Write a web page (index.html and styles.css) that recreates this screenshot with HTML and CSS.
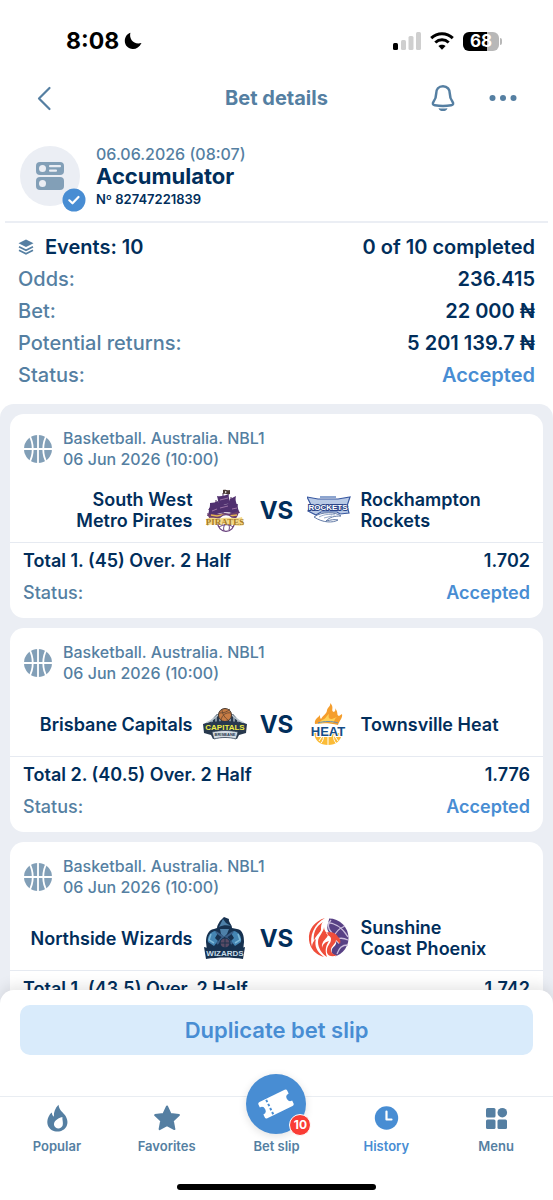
FILE: index.html
```html
<!DOCTYPE html>
<html lang="en">
<head>
<meta charset="UTF-8">
<meta name="viewport" content="width=device-width, initial-scale=1.0">
<title>Bet details</title>
<link rel="stylesheet" href="styles.css">
</head>
<body>
  <!-- shared icons -->
  <svg class="sprite" aria-hidden="true">
    <symbol id="basketball" viewBox="0 0 30 30">
      <circle cx="15" cy="15" r="14" fill="#829fb7"/>
      <path d="M15 0v30M0 15h30M6 1c5 8 5 20 0 28M24 1c-5 8-5 20 0 28" fill="none" stroke="#fff" stroke-width="1.8"/>
    </symbol>
  </svg>

  <div class="app">
    <div class="statusbar">
      <div class="clock">
        <span>8:08</span>
        <svg width="18" height="18" viewBox="0 0 18 18"><path d="M6.4.8C4.8 7.2 10 13.3 17.500 11 15.400 15.200 12 17.200 8.700 17 4.200 16.800.8 13.400.8 9 .8 5 3 2 6.400.8z"/></svg>
      </div>
      <div class="indicators">
        <svg width="28" height="18" viewBox="0 0 28 18">
          <rect x="0" y="11" width="5" height="7" rx="1.5"/>
          <g fill="#cfcfcf"><rect x="8" y="8" width="5" height="10" rx="1.5"/><rect x="15.500" y="4" width="5" height="14" rx="1.5"/><rect x="23" y="0" width="5" height="18" rx="1.5"/></g>
        </svg>
        <svg width="24" height="18" viewBox="0 0 24 18">
          <path d="M1.200 6.200C7.500.4 16.500.4 22.800 6.200M5.300 10.500c3.900-3.600 9.500-3.600 13.400 0" fill="none" stroke="#000" stroke-width="3"/>
          <path d="M12 17.800l-3.600-3.700c2-1.800 5.200-1.800 7.200 0z"/>
        </svg>
        <div class="battery"><span>68</span></div>
      </div>
    </div>

    <header class="topbar">
      <button class="icon-btn" aria-label="Back">
        <svg width="18" height="26" viewBox="0 0 18 26"><path d="M13.500 3L3 13.500l10.500 10.500" fill="none" stroke="#557fa2" stroke-width="2.2" stroke-linecap="round" stroke-linejoin="round"/></svg>
      </button>
      <h1>Bet details</h1>
      <div class="topbar-actions">
        <button class="icon-btn" aria-label="Notifications">
          <svg width="26" height="28" viewBox="0 0 26 28"><path d="M13 2.300c-4.500 0-6.800 3.200-6.800 7.200 0 4.500-1 6-2.700 8.300-1.200 1.700-.7 3.200 1.300 3.500 5.500.9 10.900.9 16.400 0 2-.3 2.500-1.800 1.300-3.500-1.700-2.300-2.700-3.800-2.700-8.300 0-4-2.300-7.200-6.800-7.200z" fill="none" stroke="#557fa2" stroke-width="2.500"/><path d="M8.500 24.200c3 .5 6 .5 9 0-.9 3.800-8.100 3.800-9 0z" fill="#557fa2"/></svg>
        </button>
        <button class="icon-btn" aria-label="More">
          <svg width="28" height="26" viewBox="0 0 28 26" fill="#557fa2"><circle cx="3.500" cy="13" r="3"/><circle cx="14" cy="13" r="3"/><circle cx="24.500" cy="13" r="3"/></svg>
        </button>
      </div>
    </header>

    <section class="ticket">
      <div class="avatar">
        <svg width="30" height="30" viewBox="0 0 30 30">
          <rect x="1" y="1" width="28" height="13" rx="4" fill="#829fb7"/>
          <rect x="1" y="16" width="28" height="13" rx="4" fill="#829fb7"/>
          <g fill="#ebeef4"><circle cx="7.500" cy="7.500" r="3.500"/><circle cx="7.500" cy="22.500" r="3.500"/><rect x="14" y="4" width="12" height="2.200" rx="1"/><rect x="14" y="8.500" width="8" height="2.200" rx="1"/></g>
        </svg>
        <svg class="avatar-badge" width="24" height="24" viewBox="0 0 24 24"><circle cx="12" cy="12" r="11.500" fill="#488dd3"/><path d="M7.300 12.300l3.200 3 6-6.300" fill="none" stroke="#fff" stroke-width="2.200" stroke-linecap="round" stroke-linejoin="round"/></svg>
      </div>
      <div class="ticket-info">
        <div class="ticket-date">06.06.2026 (08:07)</div>
        <h2>Accumulator</h2>
        <div class="ticket-number">Nº 82747221839</div>
      </div>
    </section>

    <dl class="summary">
      <div class="strong">
        <dt><svg width="16" height="16" viewBox="0 0 16 16" fill="#557fa2"><path d="M8 .5l7.500 3.800L8 8 .5 4.300z"/><path d="M1 7.700l7 3.500 7-3.500M1 11.300l7 3.500 7-3.500" fill="none" stroke="#557fa2" stroke-width="1.700"/></svg>Events: 10</dt>
        <dd>0 of 10 completed</dd>
      </div>
      <div><dt>Odds:</dt><dd>236.415</dd></div>
      <div><dt>Bet:</dt><dd>22 000 ₦</dd></div>
      <div><dt>Potential returns:</dt><dd>5 201 139.7 ₦</dd></div>
      <div><dt>Status:</dt><dd class="accepted">Accepted</dd></div>
    </dl>

    <main class="events">
      <article class="event">
        <div class="event-head">
          <svg width="30" height="30"><use href="#basketball"/></svg>
          <div>Basketball. Australia. NBL1<br>06 Jun 2026 (10:00)</div>
        </div>
        <div class="teams">
          <div class="team home">South West<br>Metro Pirates</div>
          <svg class="logo" viewBox="0 0 44 44">
            <path d="M20 5v25M13 12v17M28 9v21" stroke="#4a2857" stroke-width="1"/>
            <path d="M20 2c3-1 4 1 7 0v4c-3 1-4-1-7 0z" fill="#4a3a35"/><path d="M22 3l2 1-2 1z" fill="#fff"/>
            <path d="M14 8c4 1 9-1 12-2-1 4 1 6 2 10-4-1-9 1-14 2 2-3 1-6 0-10zM27 11l6-3c-1 4 0 6 1 9l-7 1zM7 15c3 0 6-1 8-2v8c-3-1-7 1-10 1 2-2 2-4 2-7zM14 17c5-1 10 0 14-2 0 4 0 7 3 10-5-1-11-1-17 1 1-3 1-5 0-9zM27 18l8-2c-1 4 1 7 2 9l-9 1zM6 20l9-1v9H4c2-3 2-5 2-8z" fill="#50306f"/>
            <path d="M17 12l8-2M17 20l8-2M9 23l5-2M29 21l5-1" stroke="#ae83b3" stroke-width=".8"/>
            <path d="M4 25c6 3 12 0 18 0 5 1 9 0 14-2-1 6-3 8-7 10H12c-5-1-7-4-8-8z" fill="#6b3e6e"/>
            <path d="M8 27l6 1 5-1 7 1 8-1" fill="none" stroke="#e5b653" stroke-width="1.500"/>
            <circle cx="23" cy="35" r="8.300" fill="#fff" stroke="#67407c" stroke-width="1.300"/>
            <path d="M16 39c5-3 10-3 14 0M21 43c-1-3 0-5 1-7M26 42c1-3 0-5-1-7" fill="none" stroke="#67407c" stroke-width="1"/>
            <path d="M3 31c6-3 10 0 16-1 7-1 14 1 20-1l2 8c-6 2-12-1-18-1-6 0-14-1-19 2z" fill="#f4d98a"/>
            <text x="22" y="37" class="logo-text pirates">PIRATES</text>
          </svg>
          <div class="vs">VS</div>
          <svg class="logo" viewBox="0 0 44 44">
            <rect x="13" y="8" width="16" height="2" fill="#8da5cf"/>
            <path d="M0 9l11 2h20l12-2-3 9 2 7-9 1-3-2H14l-5 3-8-4 3-6z" fill="#b9cae6" stroke="#3858a0" stroke-width="1.200"/>
            <path d="M7 29c8-6 22-5 27-1-7 0-11 1-15 5 5-1 8-2 12-1-5 3-15 3-24-3z" fill="#fff" stroke="#637ba7" stroke-width="1"/>
            <path d="M12 29c6-3 10-3 16-2M17 30l8-2" fill="none" stroke="#9aacca" stroke-width="1"/>
            <text x="21" y="22" class="logo-text rockets">ROCKETS</text>
          </svg>
          <div class="team away">Rockhampton<br>Rockets</div>
        </div>
        <div class="bet">
          <div class="bet-row strong"><span>Total 1. (45) Over. 2 Half</span><span>1.702</span></div>
          <div class="bet-row"><span>Status:</span><span class="accepted">Accepted</span></div>
        </div>
      </article>

      <article class="event">
        <div class="event-head">
          <svg width="30" height="30"><use href="#basketball"/></svg>
          <div>Basketball. Australia. NBL1<br>06 Jun 2026 (10:00)</div>
        </div>
        <div class="teams">
          <div class="team home">Brisbane Capitals</div>
          <svg class="logo" viewBox="0 0 44 44">
            <path d="M1 22c7-2 10-7 13-10h16c3 3 6 8 13 10v9l-7 2-2 4c-7-2-16-2-24 0l-2-4-7-2z" fill="#28394e"/>
            <path d="M3 21c6-2 9-5 12-8h14c3 3 6 6 12 8" fill="none" stroke="#bcc9d1" stroke-width="1.500"/>
            <path d="M9 18v5M13 15v8M17 15v9M22 14v10M27 15v9M31 15v8M35 18v5" stroke="#b4c2cb" stroke-width="1.300"/>
            <circle cx="22" cy="13" r="6.500" fill="#c87d45" stroke="#45382f" stroke-width="1"/>
            <path d="M16 11c5 0 8-1 11-4M18 18c1-5 5-8 10-7M19 7c0 5 3 9 6 11" fill="none" stroke="#60432f" stroke-width=".8"/>
            <path d="M0 22c14-4 30-4 44 0l-1 9c-14-3-28-3-42 0z" fill="#28394e"/>
            <text x="22" y="28" class="logo-text capitals">CAPITALS</text>
            <path d="M9 30c9-2 17-2 26 0l-2 7c-7-2-15-2-22 0z" fill="#d4dce3" stroke="#28394e" stroke-width=".7"/>
            <text x="22" y="34" class="logo-text brisbane">BRISBANE</text>
          </svg>
          <div class="vs">VS</div>
          <svg class="logo" viewBox="0 0 44 44">
            <path d="M8 22c-1-5 3-6 5-9 0 2 0 3 1 4 2-4 6-5 6-9 1-3 4-4 3-7 5 4 0 8 4 9 1-1 2-2 1-4 4 5 1 7 4 8l3-2c1 4-3 7-4 11-8-2-15-2-23-1z" fill="#f59e2d"/>
            <path d="M15 18c4-1 4-4 7-6-1 4 0 5 3 5l5-2c-3 2-2 4-4 6-4-2-9-1-14 1 0-2 2-3 3-4z" fill="#ffd157"/>
            <path d="M7 31h28c-1 8-6 12-14 12S8 39 7 31z" fill="#fbbb36"/>
            <path d="M21 32v11M16 33l-4 6M27 33l4 6M16 33c1 3 0 6-2 8M27 33c-1 3 0 6 2 8" fill="none" stroke="#fff" stroke-width="1"/>
            <path d="M11 21c6-2 14-2 20 0" fill="none" stroke="#608bba" stroke-width="1"/>
            <text x="21" y="34" class="logo-text heat">HEAT</text>
          </svg>
          <div class="team away">Townsville Heat</div>
        </div>
        <div class="bet">
          <div class="bet-row strong"><span>Total 2. (40.5) Over. 2 Half</span><span>1.776</span></div>
          <div class="bet-row"><span>Status:</span><span class="accepted">Accepted</span></div>
        </div>
      </article>

      <article class="event">
        <div class="event-head">
          <svg width="30" height="30"><use href="#basketball"/></svg>
          <div>Basketball. Australia. NBL1<br>06 Jun 2026 (10:00)</div>
        </div>
        <div class="teams">
          <div class="team home">Northside Wizards</div>
          <svg class="logo" viewBox="0 0 44 44">
            <path d="M14 12c0-3 2-5 3-7l4-4 5 2c-1 3 3 5 3 9l5 1c6 1 7 7 7 13l-1 9H4l-1-9c0-6 2-12 8-13z" fill="#17314f"/>
            <path d="M17 9l3-6 3 4 5 3c-4-1-8-1-12 1zM17 13h9l-2 5-3 3-3-3z" fill="#4e80a8"/>
            <path d="M12 15c-5 1-8 6-7 11l6 4 4-5-3-3 3-5zM31 15c5 1 8 6 7 11l-6 4-4-5 3-3-3-5z" fill="#4585b3"/>
            <path d="M8 18l-2 6 5 3M35 18l2 6-5 3" fill="none" stroke="#7fb9d8" stroke-width="1.500"/>
            <path d="M13 16l7 5-6 7M30 16l-7 5 6 7" fill="none" stroke="#3b5f88" stroke-width="2"/>
            <circle cx="22" cy="27" r="5" fill="#594b65" stroke="#12304e" stroke-width="1"/>
            <path d="M17 27h10M22 22v10" stroke="#1f334f"/>
            <path d="M1 31l4 1h33l4-1-2 12c-12-2-25-2-37 0z" fill="#17314f"/>
            <text x="22" y="40" class="logo-text wizards">WIZARDS</text>
          </svg>
          <div class="vs">VS</div>
          <svg class="logo" viewBox="0 0 44 44">
            <circle cx="22" cy="22" r="19.500" fill="#584185"/>
            <path d="M24 4c-5 5-2 10 1 13M16 7c10-2 19 4 25 14M38 10c-7 3-10 7-11 11M41 24c-6-3-12-2-15 2M30 38c2-4 3-9 11-9" fill="none" stroke="#cdbfdd" stroke-width="1.300"/>
            <path d="M22 1C11 0 1 10 1 22c0 10 6 17 15 20 6 2 12 0 14-3-4 1-6-2-5-6 2-3 5-4 4-8l3 3c0-6-3-9-7-9-9-6-2-13-3-18z" fill="#fff"/>
            <path d="M18 2C8 5 1 13 2 24c1 9 7 15 15 17-7-5-10-11-8-18-3 2-4 5-4 8-3-11 2-23 13-29zM16 6C8 11 6 18 7 25c2-6 5-7 7-11 0-4 0-6 2-8zM17 11c0 5-6 9-6 15s4 12 9 15c-3-8 0-13 2-16-4 1-6 3-7 7-1-8 6-9 6-14-2-1-4-4-4-7zM19 17c5-3 11 1 12 4 2 1 3 4 2 7l-4-4c0 4-5 6-5 10 0 3 3 5 6 5-6 3-11 0-10-5 0-5 4-6 4-11 0-3-3-3-5-6z" fill="#ef4e3b"/>
          </svg>
          <div class="team away">Sunshine<br>Coast Phoenix</div>
        </div>
        <div class="bet">
          <div class="bet-row strong"><span>Total 1. (43.5) Over. 2 Half</span><span>1.742</span></div>
        </div>
      </article>
    </main>

    <footer class="dock">
      <button class="duplicate">Duplicate bet slip</button>
      <nav class="tabs">
        <a href="#popular">
          <svg width="28" height="28" viewBox="0 0 28 28"><path d="M15.500.8c.7 4.800 3.300 6.800 6.400 10.200 6 8.500.7 16.500-7.300 16.500-8.600 0-13.200-8.300-8.200-16.300.8-1.300 1.700-2 2.500-2.600 0 2 .6 3.200 2 4.100C10.600 8.200 12.300 3.800 15.500.8zM19.400 13c-5.200 1.300-9 4.500-8.300 8.300.8 4.100 7.600 4.200 8.600 0 .7-2.800-.5-5-.3-8.300z" fill="#557fa2" fill-rule="evenodd"/></svg>
          Popular
        </a>
        <a href="#favorites">
          <svg width="28" height="28" viewBox="0 0 28 28"><path d="M14 2.500l3.600 7.600 8.300 1-6.100 5.700 1.600 8.300-7.400-4-7.400 4 1.600-8.300-6.100-5.700 8.300-1z" fill="#557fa2" stroke="#557fa2" stroke-width="2" stroke-linejoin="round"/></svg>
          Favorites
        </a>
        <a href="#betslip">
          <span class="slip">
            <svg width="36" height="32" viewBox="0 0 36 32"><g transform="rotate(-26 18 16)"><path d="M4 7h28q2 0 2 2v3a4 4 0 0 0 0 8v3q0 2-2 2H4q-2 0-2-2v-3a4 4 0 0 0 0-8V9q0-2 2-2z" fill="#fff"/><path d="M11 8v17" stroke="#488dd3" stroke-width="2" stroke-dasharray="2.500 2"/></g></svg>
            <span class="count">10</span>
          </span>
          Bet slip
        </a>
        <a href="#history" class="active">
          <svg width="28" height="28" viewBox="0 0 28 28"><circle cx="14.500" cy="14" r="11.700" fill="#488dd3"/><path d="M14.500 7.500v8h5" fill="none" stroke="#fff" stroke-width="2.200" stroke-linecap="round" stroke-linejoin="round"/></svg>
          History
        </a>
        <a href="#menu">
          <svg width="28" height="28" viewBox="0 0 28 28" fill="#557fa2"><rect x="4" y="4" width="9.500" height="9.500" rx="1.500"/><circle cx="20.300" cy="8.700" r="4.800"/><rect x="4" y="15.500" width="9.500" height="9.500" rx="1.500"/><rect x="15.500" y="15.500" width="9.500" height="9.500" rx="1.500"/></svg>
          Menu
        </a>
      </nav>
      <div class="home-indicator"></div>
    </footer>
  </div>
</body>
</html>
```
FILE: styles.css
```css
* {
  box-sizing: border-box;
}
body {
  margin: 0;
  font-family: Inter, "Liberation Sans", sans-serif;
  font-size: 16px;
  font-weight: 500;
  color: #012e5b;
  background-color: #fff;
}
h1, h2, dl, dd {
  margin: 0;
}
button {
  border: none;
  font-family: inherit;
  cursor: pointer;
}
svg {
  display: block;
  flex-shrink: 0;
}
.sprite {
  display: none;
}
.app {
  height: 100vh;
  display: flex;
  flex-direction: column;
  overflow: hidden;
}
.statusbar, .topbar, .ticket, .summary, .dock {
  flex-shrink: 0;
}

/* phone status bar */
.statusbar {
  display: flex;
  justify-content: space-between;
  align-items: center;
  padding: 28px 54px 0 66px;
  color: #000;
}
.clock {
  display: flex;
  align-items: center;
  gap: 5px;
  font-size: 23px;
  line-height: 26px;
  font-weight: 700;
}
.indicators {
  display: flex;
  align-items: center;
  gap: 9px;
}
.battery {
  position: relative;
  width: 36px;
  height: 19px;
  border-radius: 6px;
  background: linear-gradient(to right, #000 68%, #b8b8b8 68%);
  color: #fff;
  font-size: 17px;
  line-height: 19px;
  font-weight: 700;
  text-align: center;
}
.battery::after {
  content: "";
  position: absolute;
  right: -3px;
  top: 6px;
  width: 2px;
  height: 7px;
  border-radius: 0 2px 2px 0;
  background-color: #b8b8b8;
}

/* title bar */
.topbar {
  display: grid;
  grid-template-columns: 1fr auto 1fr;
  align-items: center;
  height: 60px;
  margin-top: 14px;
  padding: 0 36px;
}
.topbar h1 {
  font-size: 20px;
  font-weight: 700;
  color: #557fa2;
}
.icon-btn {
  padding: 0;
  background: none;
  justify-self: start;
}
.topbar-actions {
  display: flex;
  justify-content: flex-end;
  align-items: center;
  gap: 33px;
}

/* ticket header */
.ticket {
  display: flex;
  gap: 16px;
  margin: 16px 5px 0;
  padding: 0 15px 11px;
  border-bottom: 2px solid #ebeef4;
}
.avatar {
  position: relative;
  display: flex;
  justify-content: center;
  align-items: center;
  width: 60px;
  height: 60px;
  margin-top: 2px;
  border-radius: 50%;
  background-color: #ebeef4;
}
.avatar-badge {
  position: absolute;
  right: -6px;
  bottom: -6px;
}
.ticket-date {
  font-size: 16px;
  line-height: 20px;
  color: #557fa2;
}
.ticket h2 {
  font-size: 22px;
  line-height: 25px;
  font-weight: 700;
}
.ticket-number {
  font-size: 13px;
  line-height: 21px;
  font-weight: 600;
}

/* totals */
.summary {
  padding: 8px 18px 13px;
  font-size: 20px;
  line-height: 32px;
}
.summary > div {
  display: flex;
  justify-content: space-between;
}
.summary dt {
  display: flex;
  align-items: center;
  gap: 11px;
  color: #557fa2;
}
.summary .strong dt {
  font-weight: 600;
  color: #012e5b;
}
.summary dd {
  font-weight: 600;
}
.summary .accepted, .bet-row .accepted {
  font-weight: 600;
  color: #488dd3;
}

/* events list */
.events {
  flex: 1;
  min-height: 0;
  margin-bottom: -14px;
  padding: 10px;
  overflow: hidden;
  border-radius: 14px 14px 0 0;
  background-color: #ebeef4;
}
.event {
  margin-bottom: 10px;
  border-radius: 14px;
  background-color: #fff;
}
.event-head {
  display: flex;
  align-items: center;
  gap: 10px;
  padding: 14px 13px 0;
  font-size: 16px;
  line-height: 21px;
  color: #557fa2;
}
.teams {
  display: grid;
  grid-template-columns: 1fr 44px 40px 44px 1fr;
  align-items: center;
  gap: 10px;
  padding: 18px 13px 10px;
  border-bottom: 1px solid #e6eaf1;
}
.team {
  font-size: 18px;
  line-height: 21px;
  font-weight: 600;
}
.home {
  text-align: right;
}
.vs {
  font-size: 24px;
  font-weight: 700;
  text-align: center;
}
.logo {
  width: 44px;
  height: 44px;
}
.bet {
  padding: 6px 13px 13px;
}
.bet-row {
  display: flex;
  justify-content: space-between;
  font-size: 18px;
  line-height: 24px;
  color: #557fa2;
}
.bet-row + .bet-row {
  margin-top: 8px;
}
.bet-row.strong {
  font-weight: 600;
  color: #012e5b;
}

/* lettering inside the club logos */
.logo-text {
  font-family: "Liberation Sans", sans-serif;
  font-weight: 700;
  text-anchor: middle;
}
.pirates {
  font-family: "Liberation Serif", serif;
  font-size: 9px;
  fill: #a77b27;
}
.rockets {
  font-size: 8px;
  fill: #fff;
  stroke: #2b4588;
  stroke-width: 2px;
  paint-order: stroke;
}
.capitals {
  font-size: 8px;
  fill: #efed45;
}
.brisbane {
  font-size: 4px;
  fill: #28394e;
}
.heat {
  font-size: 13px;
  fill: #164d87;
  stroke: #fff;
  stroke-width: 2px;
  paint-order: stroke;
}
.wizards {
  font-size: 8px;
  fill: #c6dbe7;
}

/* bottom dock */
.dock {
  position: relative;
  padding: 15px 0 10px;
  border-radius: 14px 14px 0 0;
  background-color: #fff;
  box-shadow: 0 -4px 14px rgba(0, 0, 0, 0.1);
}
.duplicate {
  display: block;
  width: calc(100% - 40px);
  height: 50px;
  margin: 0 auto 41px;
  border-radius: 10px;
  background-color: #d9ebfb;
  color: #488dd3;
  font-size: 22px;
  font-weight: 600;
}
.tabs {
  display: grid;
  grid-template-columns: repeat(5, 1fr);
  padding: 7px 2px 0;
  border-top: 1px solid #e9edf2;
}
.tabs a {
  display: flex;
  flex-direction: column;
  align-items: center;
  gap: 5px;
  font-size: 13px;
  line-height: 18px;
  font-weight: 600;
  color: #557fa2;
  text-decoration: none;
}
.tabs .active {
  color: #488dd3;
}
.slip {
  position: relative;
  display: flex;
  justify-content: center;
  align-items: center;
  width: 60px;
  height: 60px;
  margin: -30px 0 -2px;
  border-radius: 50%;
  background-color: #488dd3;
  box-shadow: 0 2px 8px rgba(0, 0, 0, 0.12);
}
.count {
  position: absolute;
  right: -5px;
  bottom: -2px;
  width: 22px;
  height: 22px;
  border: 1px solid #fff;
  border-radius: 50%;
  background-color: #fa3c35;
  color: #fff;
  font-size: 12px;
  line-height: 20px;
  font-weight: 700;
  text-align: center;
}
.home-indicator {
  width: 36%;
  height: 6px;
  margin: 29px auto 0;
  border-radius: 3px;
  background-color: #000;
}
```
